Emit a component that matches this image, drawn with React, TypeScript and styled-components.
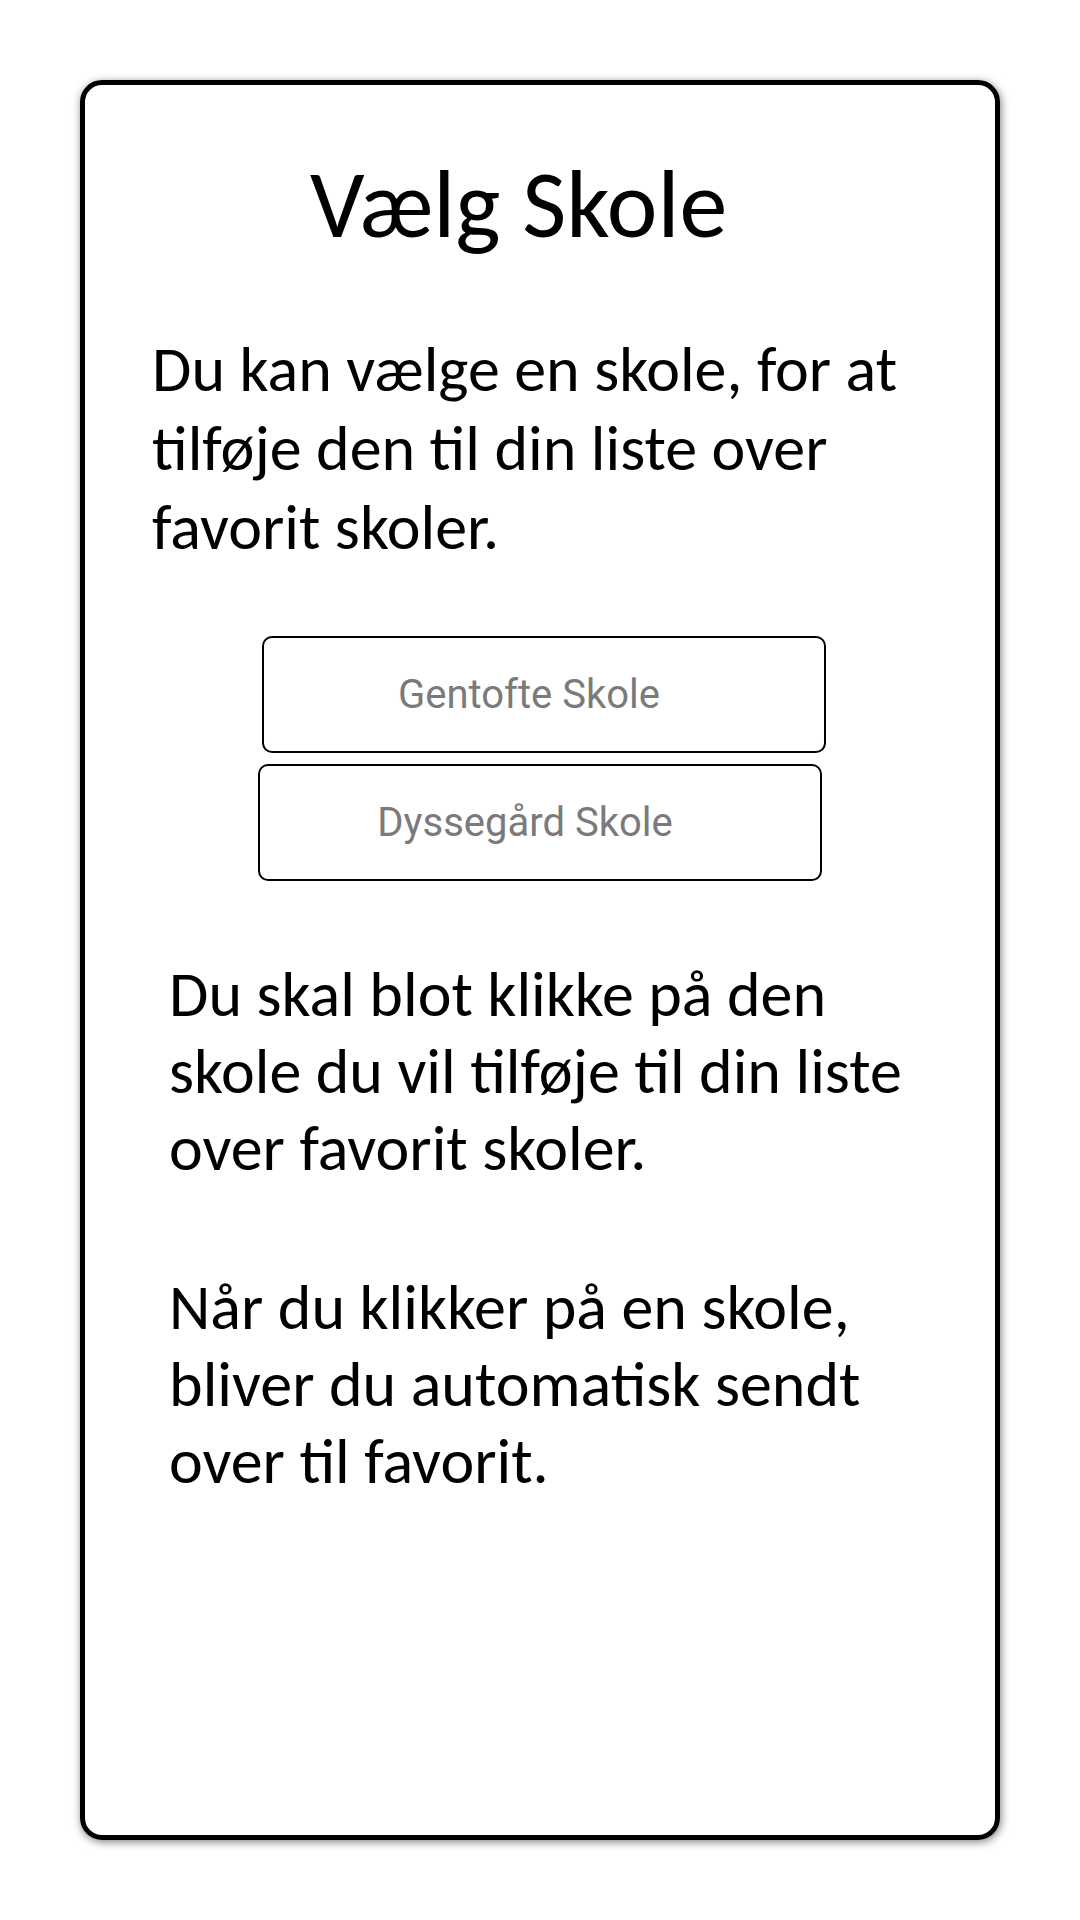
import React from 'react'
import styled, { createGlobalStyle } from 'styled-components'

const GlobalStyle = createGlobalStyle`
  html, body {
    margin: 0;
    padding: 0;
    background: #ffffff;
  }
  body {
    font-family: Carlito, Calibri, Lato, 'Open Sans', sans-serif;
    color: #000000;
  }
`

const Page = styled.div`
  width: 1080px;
  height: 1920px;
  padding: 80px 0 0 80px;
  box-sizing: border-box;
`

const Card = styled.div`
  width: 920px;
  height: 1760px;
  box-sizing: border-box;
  border: 5px solid #000000;
  border-radius: 22px;
  box-shadow: 1px 2px 8px rgba(0, 0, 0, 0.5);
  display: flex;
  flex-direction: column;
  align-items: flex-start;
`

const Title = styled.h1`
  margin: 62px 0 0 225px;
  font-size: 96px;
  font-weight: 400;
  line-height: 1.2;
`

const Paragraph = styled.p<{ $indent: number; $top: number; $lineHeight: number }>`
  margin: ${({ $top }) => $top}px 0 0 ${({ $indent }) => $indent}px;
  font-size: 64px;
  line-height: ${({ $lineHeight }) => $lineHeight}px;
  white-space: nowrap;
`

const SchoolList = styled.div`
  display: flex;
  flex-direction: column;
  align-items: flex-start;
  gap: 11px;
  margin-top: 69px;
`

const SchoolButton = styled.button<{ $indent: number }>`
  margin-left: ${({ $indent }) => $indent}px;
  width: 564px;
  height: 117px;
  box-sizing: border-box;
  border: 2px solid #000000;
  border-radius: 10px;
  background: #ffffff;
  padding: 0 30px 0 0;
  font-family: Roboto, 'Noto Sans', sans-serif;
  font-size: 40px;
  color: #7a7a7a;
  cursor: pointer;
`

const schools = [
  { name: 'Gentofte Skole', indent: 177 },
  { name: 'Dyssegård Skole', indent: 173 },
]

export default function App(): JSX.Element {
  return (
    <>
      <GlobalStyle />
      <Page>
        <Card>
          <Title>Vælg Skole</Title>
          <Paragraph $indent={67} $top={68} $lineHeight={79}>
            Du kan vælge en skole, for at
            <br />
            tilføje den til din liste over
            <br />
            favorit skoler.
          </Paragraph>
          <SchoolList>
            {schools.map((school) => (
              <SchoolButton key={school.name} $indent={school.indent}>
                {school.name}
              </SchoolButton>
            ))}
          </SchoolList>
          <Paragraph $indent={84} $top={75} $lineHeight={77}>
            Du skal blot klikke på den
            <br />
            skole du vil tilføje til din liste
            <br />
            over favorit skoler.
          </Paragraph>
          <Paragraph $indent={84} $top={82} $lineHeight={77}>
            Når du klikker på en skole,
            <br />
            bliver du automatisk sendt
            <br />
            over til favorit.
          </Paragraph>
        </Card>
      </Page>
    </>
  )
}
